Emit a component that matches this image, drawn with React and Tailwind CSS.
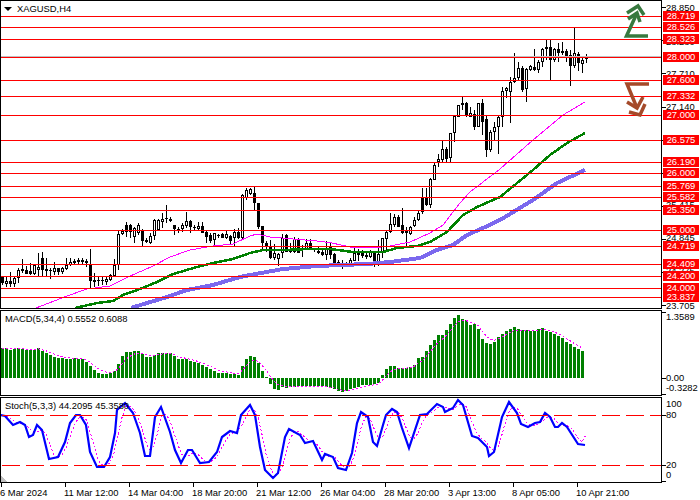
import React from "react";

// candles up to x=430, read in units of 1/3 px from y=170: [black, top, bottom, wickTop, wickBottom]
const leftCandles = [
  [1,322,340,318,345],[0,334,342,322,352],[1,334,342,305,352],[0,325,342,318,352],[0,300,325,295,340],
  [1,297,302,267,310],[1,301,311,288,312],[1,304,312,280,314],[0,286,312,285,315],[0,292,300,248,318],
  [1,264,300,247,318],[1,296,304,265,317],[1,299,301,295,326],[0,295,305,277,315],[1,295,305,293,315],
  [0,295,305,292,312],[0,285,297,265,300],[0,275,285,265,288],[1,273,279,268,285],[1,270,277,263,284],
  [1,271,277,264,286],[1,274,280,267,290],[1,283,332,237,355],[1,330,337,310,352],[1,331,334,322,347],
  [1,329,333,322,346],[0,327,337,318,345],[0,315,330,312,332],[0,285,318,267,320],[0,192,285,180,300],
  [0,182,192,178,196],[1,165,185,155,200],[1,166,187,163,205],[0,175,200,172,218],[0,165,190,160,195],
  [1,180,213,178,228],[1,210,215,203,220],[0,197,218,190,222],[0,150,198,148,210],[0,150,180,148,183],
  [0,148,155,130,175],[1,145,148,105,158],[1,147,152,140,155],[1,165,178,165,195],[1,178,181,170,190],
  [0,166,178,160,185],[0,153,168,125,175],[1,153,172,150,188],[1,170,175,165,180],[0,168,178,155,180],
  [1,168,188,155,190],[1,185,200,183,218],[1,195,212,190,218],[0,190,210,188,228],[1,194,198,192,205],
  [1,193,203,190,205],[0,192,204,182,207],[1,198,212,195,225],[0,185,205,178,227],[1,187,205,175,207],
  [0,75,205,72,207],[0,60,85,55,90],[0,58,72,55,75],[1,70,100,52,120],[1,100,170,98,177],
  [1,168,218,168,240],[1,218,228,212,245],[1,232,265,210,268],[0,250,265,222,270],[0,252,268,250,288],
  [0,205,250,192,265],[1,195,245,192,247],[1,236,245,218,248],[0,208,245,200,248],[1,208,250,205,250],
  [1,235,240,225,262],[0,218,238,207,240],[1,218,238,208,240],[1,238,240,235,245],[1,242,248,232,252],
  [1,245,255,240,258],[0,235,255,212,270],[1,232,255,215,268],[1,252,280,250,282],[1,277,280,270,285],
  [1,283,290,270,298],[0,282,288,275,292],[0,270,282,265,285],[0,248,272,235,274],[1,248,255,237,272],
  [1,250,258,240,265],[1,255,262,248,268],[0,247,260,240,265],[1,248,280,245,290],[0,252,280,210,288],
  [0,205,250,205,265],[0,187,207,182,240],[0,162,185,130,188],[0,140,165,132,170],[1,140,170,135,172],
  [1,165,190,115,192],[1,182,190,170,228],[0,170,192,168,195],[0,150,168,140,172],[0,128,150,120,152],
  [1,82,127,55,132],[1,85,105,55,108],[0,28,105,25,115],
];

// from x=434 on, page pixels
const rightCandles = [
  [0,165,180,162,180],[0,159,162,154,167],[0,149,160,141,162],[1,149,159,147,163],[0,133,158,133,162],
  [0,116,133,115,142],[0,105,117,105,117],[0,103,105,97,110],[1,103,115,102,117],[0,113,117,107,117],
  [1,114,127,110,130],[0,103,127,103,127],[1,103,122,99,135],[1,119,150,116,157],[0,132,150,130,152],
  [0,127,132,122,140],[0,117,127,116,154],[0,91,117,87,127],[0,88,91,87,98],[0,82,92,77,123],
  [0,78,82,53,83],[0,68,78,62,80],[1,68,90,66,92],[0,69,89,68,102],[0,66,70,65,71],
  [1,67,70,49,71],[0,62,70,60,73],[0,49,62,48,67],[0,47,49,40,60],[1,47,60,39,80],
  [0,49,60,48,62],[1,49,53,43,62],[0,51,53,42,55],[1,51,56,49,62],[1,55,66,50,86],
  [0,53,66,28,68],[1,54,63,52,71],[0,60,64,57,73],[0,57,59,54,63],
];

const candles = [
  ...leftCandles.map(([b, ...r]) => [b, ...r.map((v) => Math.round(170 + v / 3))]),
  ...rightCandles,
];

const levels = [16, 27, 39, 57, 80, 96, 115, 140, 162, 173, 186, 197, 210, 230, 246, 264, 276, 288, 297];
const levelTags = ["28.719", "28.526", "28.323", "28.000", "27.600", "27.332", "27.000", "26.575", "26.190", "26.000", "25.769", "25.582", "25.350", "25.000", "24.719", "24.409", "24.200", "24.000", "23.837"];

const priceScale = [
  ["28.850", 8], ["28.280", 42], ["27.710", 74], ["27.140", 107],
  ["25.415", 205], ["24.845", 238], ["24.275", 271], ["23.705", 306],
];
const priceTicks = [7, 40, 73, 107, 140, 173, 206, 239, 272, 305];

const fastMa = "36,308 67,296 87,289 110,286 128,277 153,266 170,257 190,250 213,246 233,244 250,236 257,234 270,237 293,239 317,241 332,243 350,247 372,248 390,246 410,242 430,233 443,225 460,203 470,192 483,182 500,169 533,140 563,115 585,102";
const midMa = "75,308 97,303 113,301 123,295 140,289 157,282 173,274 197,267 213,263 233,259 250,253 263,250 283,250 310,249 330,249 353,252 383,252 397,248 417,246 430,242 447,232 463,215 477,207 500,197 533,170 550,155 567,143 585,133";
const slowMa = "131,308 147,303 167,297 187,290 213,285 240,277 250,275 283,269 317,266 367,264 390,262 420,258 437,250 453,245 467,235 483,228 500,220 533,200 557,183 585,170";

// tops of the MACD bars in 1/3 px from y=300, zero line at 233
const macdTops = [
  144,144,149,148,144,146,149,149,149,144,152,158,165,170,175,175,176,176,175,176,178,186,197,209,220,222,222,220,213,193,
  168,156,156,153,154,162,170,170,165,160,160,158,160,168,178,178,178,182,185,190,195,200,207,212,218,220,218,222,222,224,
  198,178,168,170,190,213,231,253,268,270,260,263,262,260,258,258,258,258,258,258,258,262,265,268,273,275,272,268,265,260,
  255,254,254,252,250,225,208,197,197,203,204,203,200,195,175,172,152,135,120,105,105,90,72,55,45,57,60,75,72,88,
  118,128,132,127,112,102,93,88,82,88,90,90,92,92,88,85,92,97,102,107,115,127,133,142,148,152,
];
const macdY = macdTops.map((t) => 300 + t / 3);

const stochK = [
  [0,415],[5,416],[13,425],[20,422],[25,425],[29,437],[33,435],[37,425],[42,430],[49,459],[58,457],[65,442],[70,423],[76,415],[80,415],[86,425],[90,452],[97,467],[104,467],[110,457],[115,433],[117,410],[125,403],[133,413],[140,433],[145,456],[150,456],[155,417],[161,407],[170,432],[175,450],[181,463],[188,450],[192,450],[200,463],[209,462],[217,452],[222,437],[230,431],[237,433],[241,415],[250,405],[255,415],[260,447],[265,470],[273,478],[278,473],[285,437],[289,429],[300,435],[305,443],[313,441],[322,460],[325,454],[333,457],[338,468],[346,470],[352,453],[357,423],[361,412],[368,417],[373,442],[377,446],[383,425],[386,415],[392,409],[397,412],[402,428],[409,448],[420,415],[427,414],[437,404],[443,407],[445,412],[453,408],[458,400],[463,405],[472,436],[478,438],[487,447],[489,456],[494,452],[502,417],[509,402],[517,413],[521,424],[528,427],[535,423],[540,422],[545,413],[550,417],[555,427],[558,427],[562,423],[567,427],[578,444],[585,445],
];

// %K at every bar, then the 3 bar average for %D
const sampleK = (x) => {
  const n = stochK.findIndex((p) => p[0] >= x);
  if (n <= 0) return stochK[0][1];
  const [x0, y0] = stochK[n - 1];
  const [x1, y1] = stochK[n];
  return y0 + ((y1 - y0) * (x - x0)) / (x1 - x0);
};
const kBars = Array.from({ length: 147 }, (_, i) => sampleK(2 + 4 * i));
const stochD = kBars
  .map((y, i) => {
    const win = kBars.slice(Math.max(0, i - 2), i + 1);
    return `${2 + 4 * i},${win.reduce((a, b) => a + b, 0) / win.length}`;
  })
  .join(" ");

let ema = macdY[0];
const macdSignal = macdY
  .map((y, i) => {
    ema = ema + (y - ema) * 0.4;
    return `${2 + 4 * i},${ema}`;
  })
  .join(" ");

const timeLabels = ["6 Mar 2024", "11 Mar 12:00", "14 Mar 04:00", "18 Mar 20:00", "21 Mar 12:00", "26 Mar 04:00", "28 Mar 20:00", "3 Apr 13:00", "8 Apr 05:00", "10 Apr 21:00"];

const MainChart = () => (
  <svg viewBox="1 1 660 307" width="660" height="307" shapeRendering="crispEdges" className="block">
    {candles.map(([black, top, bottom, wickTop, wickBottom], i) => {
      const x = 2 + 4 * i;
      return (
        <g key={x}>
          <rect x={x} y={wickTop} width="1" height={wickBottom - wickTop} fill="#000" />
          <rect x={x - 1} y={top} width="3" height={Math.max(bottom - top, 1)} fill="#000" />
          {!black && bottom - top > 2 && <rect x={x} y={top + 1} width="1" height={bottom - top - 2} fill="#fff" />}
        </g>
      );
    })}
    <polyline points={slowMa} fill="none" stroke="#7b68ee" strokeWidth="4" />
    <polyline points={midMa} fill="none" stroke="#008000" strokeWidth="2.5" />
    <polyline points={fastMa} fill="none" stroke="#ff00ff" strokeWidth="1" />
    <rect x="1" y="56" width="660" height="1" fill="#c0c0c0" />
    {levels.map((y) => (
      <rect key={y} x="1" y={y} width="660" height="1" fill="#ff0000" />
    ))}
    {/* up and down arrows */}
    <g fill="none" stroke="#38793f" strokeWidth="3.5" shapeRendering="auto">
      <path d="M648 36H626.5L637 13" />
      <path d="M628 19L637 13L640 22" />
      <path d="M627 13L638 6L644 15" />
    </g>
    <g fill="none" stroke="#a54a2a" strokeWidth="3.5" shapeRendering="auto">
      <path d="M649 84H627L637 108" />
      <path d="M627 102L637 108L643 97" />
      <path d="M629 112L640 115L645 104" />
    </g>
  </svg>
);

const MacdChart = () => (
  <svg viewBox="1 311 660 84" width="660" height="84" shapeRendering="crispEdges" className="block">
    {macdY.map((y, i) => (
      <rect key={i} x={1 + 4 * i} y={Math.min(y, 378)} width="3" height={Math.abs(y - 378)} fill="#008000" />
    ))}
    <polyline points={macdSignal} fill="none" stroke="#ff00ff" strokeWidth="1" strokeDasharray="2 2" />
  </svg>
);

const StochChart = () => (
  <svg viewBox="1 398 660 84" width="660" height="84" shapeRendering="crispEdges" className="block">
    <polygon points="1,476 7,482 1,482" fill="#c0c0c0" />
    <polyline points={stochD} fill="none" stroke="#ff00ff" strokeWidth="1" strokeDasharray="2 2" />
    <polyline points={stochK.map((p) => p.join(",")).join(" ")} fill="none" stroke="#0000ff" strokeWidth="2.2" shapeRendering="auto" />
    <line x1="2" y1="415.5" x2="661" y2="415.5" stroke="#ff0000" strokeDasharray="18 6" />
    <line x1="2" y1="465.5" x2="661" y2="465.5" stroke="#ff0000" strokeDasharray="18 6" />
  </svg>
);

const AxisTick = ({ y }) => <span className="absolute left-0 w-1 h-px bg-black" style={{ top: y }} />;

const AxisText = ({ y, children }) => (
  <span className="absolute left-1 h-[10px] leading-[10px] text-black" style={{ top: y - 5 }}>
    {children}
  </span>
);

export default function App() {
  return (
    <div className="w-[700px] h-[500px] bg-white flex flex-col gap-px overflow-hidden text-[9.4px] text-black font-['Liberation_Sans',Arial,sans-serif]">
      {/* price pane */}
      <div className="flex h-[309px] shrink-0">
        <div className="relative w-[662px] border border-black overflow-hidden">
          <MainChart />
          <div className="absolute top-[3px] left-[3px] flex items-center gap-[5px] leading-[10px]">
            <span className="w-0 h-0 border-x-[4px] border-x-transparent border-t-[4px] border-t-black" />
            <span>XAGUSD,H4</span>
          </div>
        </div>
        <div className="relative flex-1">
          {priceTicks.map((y) => (
            <AxisTick key={y} y={y} />
          ))}
          {priceScale.map(([label, y]) => (
            <AxisText key={label} y={y}>
              {label}
            </AxisText>
          ))}
          {levelTags.map((label, i) => (
            <span
              key={label}
              className="absolute left-px w-9 h-[10px] leading-[10px] bg-[#ff0000] text-white text-center"
              style={{ top: levels[i] - 5 }}
            >
              {label}
            </span>
          ))}
        </div>
      </div>

      {/* MACD pane */}
      <div className="flex h-[86px] shrink-0">
        <div className="relative w-[662px] border border-black overflow-hidden">
          <MacdChart />
          <span className="absolute top-[3px] left-1 leading-[10px] whitespace-nowrap">MACD(5,34,4) 0.5552 0.6088</span>
        </div>
        <div className="relative flex-1">
          <AxisTick y={2} />
          <AxisTick y={68} />
          <AxisTick y={84} />
          <AxisText y={7}>1.3589</AxisText>
          <AxisText y={68}>0.00</AxisText>
          <AxisText y={78}>-0.3282</AxisText>
        </div>
      </div>

      {/* stochastic pane */}
      <div className="flex h-[86px] shrink-0">
        <div className="relative w-[662px] border border-black overflow-hidden">
          <StochChart />
          <span className="absolute top-[3px] left-1 leading-[10px] whitespace-nowrap">Stoch(5,3,3) 44.2095 45.3580</span>
        </div>
        <div className="relative flex-1">
          <AxisTick y={18} />
          <AxisTick y={68} />
          <AxisTick y={84} />
          <AxisText y={7}>100</AxisText>
          <AxisText y={18}>80</AxisText>
          <AxisText y={68}>20</AxisText>
          <AxisText y={78}>0</AxisText>
        </div>
      </div>

      {/* time axis */}
      <div className="flex flex-1 pl-px -mt-px">
        {timeLabels.map((label) => (
          <div key={label} className="w-16 flex flex-col whitespace-nowrap">
            <span className="w-px h-1 bg-black" />
            <span className="-ml-px leading-[10px] mt-[1px]">{label}</span>
          </div>
        ))}
      </div>
    </div>
  );
}
